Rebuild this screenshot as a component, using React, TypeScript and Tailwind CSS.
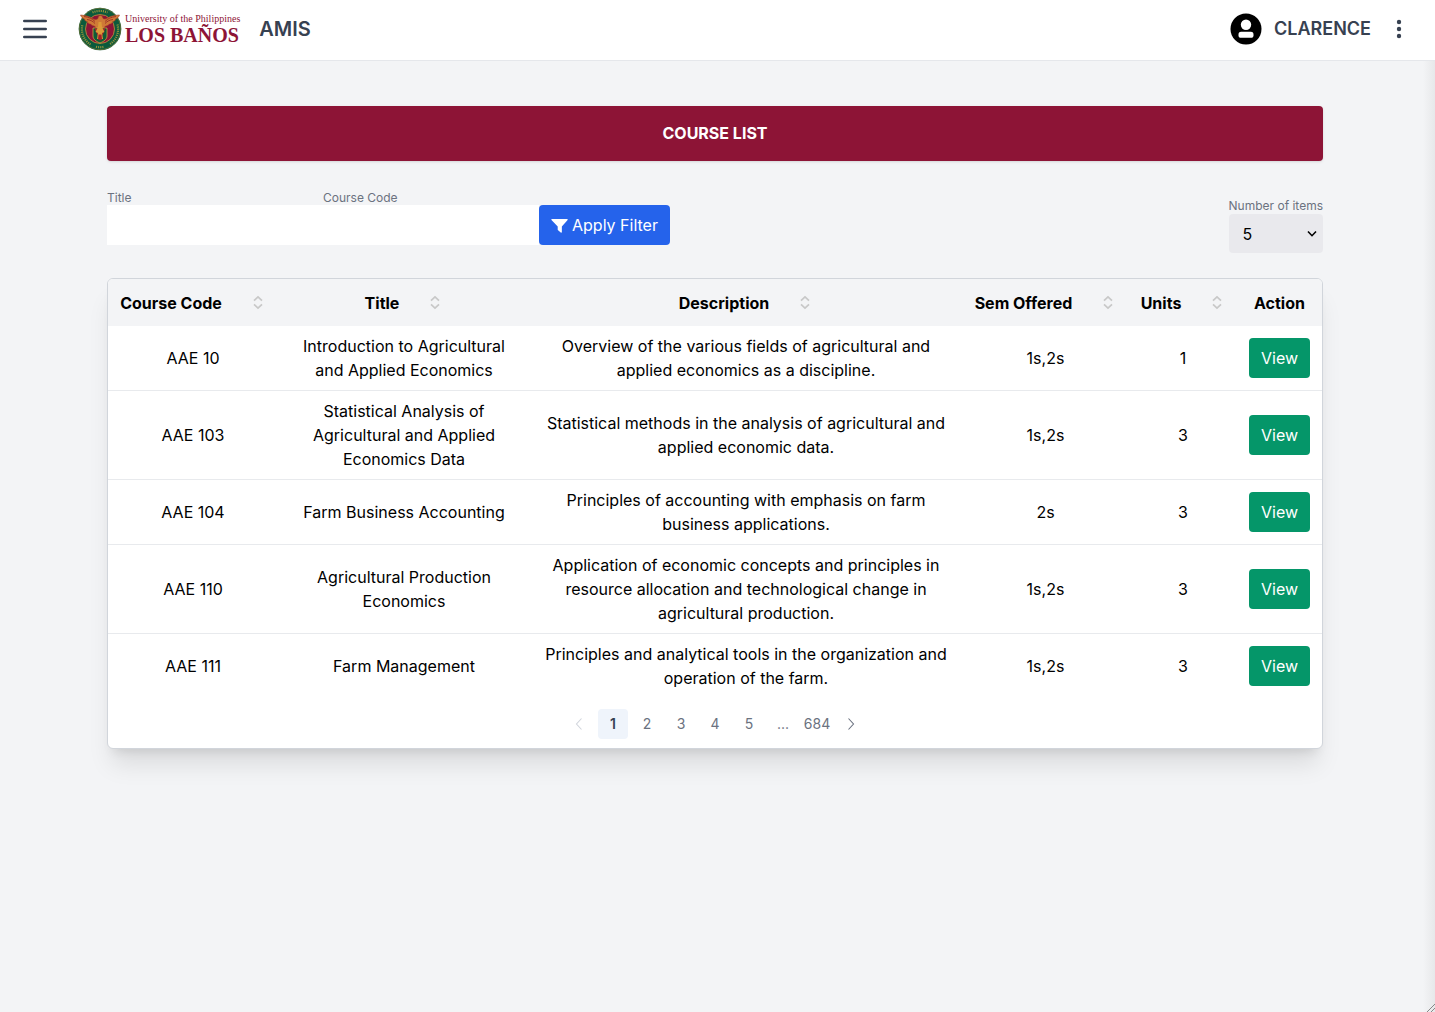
import { useState } from "react";

const courses = [
  { code: "AAE 10", title: "Introduction to Agricultural and Applied Economics", description: "Overview of the various fields of agricultural and applied economics as a discipline.", sem: "1s,2s", units: 1 },
  { code: "AAE 103", title: "Statistical Analysis of Agricultural and Applied Economics Data", description: "Statistical methods in the analysis of agricultural and applied economic data.", sem: "1s,2s", units: 3 },
  { code: "AAE 104", title: "Farm Business Accounting", description: "Principles of accounting with emphasis on farm business applications.", sem: "2s", units: 3 },
  { code: "AAE 110", title: "Agricultural Production Economics", description: "Application of economic concepts and principles in resource allocation and technological change in agricultural production.", sem: "1s,2s", units: 3 },
  { code: "AAE 111", title: "Farm Management", description: "Principles and analytical tools in the organization and operation of the farm.", sem: "1s,2s", units: 3 },
];

const columns = [
  { label: "Course Code", width: "w-[170px]" },
  { label: "Title", width: "w-[252px]" },
  { label: "Description", width: "w-[432px]" },
  { label: "Sem Offered", width: "w-[167px]" },
  { label: "Units", width: "w-[108px]" },
];

function Seal() {
  return (
    <svg viewBox="0 0 44 44" className="size-11 shrink-0" aria-hidden="true">
      <circle cx="22" cy="22" r="21.3" fill="#0b5a3c" />
      <circle cx="22" cy="22" r="20.7" fill="none" stroke="#8a7a35" strokeWidth=".6" />
      <circle cx="22" cy="22" r="14.500" fill="#8d1436" stroke="#b79b3c" strokeWidth=".8" />
      <g fill="none" stroke="#c9a63c" strokeWidth="2.200" strokeDasharray="1.100 1" opacity=".75">
        <path d="M12.500 37.500A18.200 18.200 0 0 1 4.500 17.500" />
        <path d="M14.500 5.500A18.200 18.200 0 0 1 29.500 5.500" />
        <path d="M39.500 17.500A18.200 18.200 0 0 1 31.500 37.500" />
        <path d="M18 39.800A18.200 18.200 0 0 0 26 39.800" />
      </g>
      <path d="M2.500 8c5 .5 8.500 1 12 3.500 2.500 1.500 4 1.300 5.500 0 .2-1.900 1-3 2.400-3 1.200 0 2 .8 2.200 1.900.2.800.5 1.100 1.300 1.500 2 .7 4-1.200 6.300-2.300C35 8.500 38 8.200 41.500 8c-1 2.300-2 3.500-4 4 .2 1.500-1.500 2.500-3 2.700-.2 1.500-1.700 2.300-3.200 2.400-.6 1.300-2 1.900-3.600 1.800l-2.500 2.500-1.500 1H20.500l-1.700-1-2.500-2.500c-1.600.1-3-.5-3.600-1.800-1.500-.1-3-.900-3.200-2.400-1.500-.2-3.200-1.200-3-2.700-2-.5-3-1.700-4-4z" fill="#cf7a36" stroke="#a33b24" strokeWidth=".6" />
      <path d="M6 9.500c5 .7 8 2 11 5M38 9.500c-5 .7-8 2-11 5M9 12.500c4 .5 6 2 8 4M35 12.500c-4 .5-6 2-8 4" fill="none" stroke="#9b2d25" strokeWidth=".9" />
      <path d="M15 21h14v8c0 3.500-3.500 5.500-7 7-3.500-1.500-7-3.500-7-7z" fill="#0f5a38" stroke="#d9b53e" strokeWidth=".7" />
      <path d="M16.500 21.500h11L22 34z" fill="#a61f2b" />
      <path d="M20.500 15h3l.5 5 2.500 5-2.500 1 1 6h-6l1-6-2.500-1 2.500-5z" fill="#dc9a38" />
      <path d="M20.500 27.500h3l.5 5h-4z" fill="#a61f2b" />
    </svg>
  );
}

function SortIcon() {
  return (
    <svg viewBox="0 0 16 16" className="size-4 shrink-0" fill="none" stroke="#c8c8c8" strokeWidth="1.700" aria-hidden="true">
      <path d="M4 5.700 8 1.900l4 3.800M4 9.300l4 3.800 4-3.800" />
    </svg>
  );
}

function Chevron({ left = false }: { left?: boolean }) {
  return (
    <svg viewBox="0 0 16 16" className="size-4" fill="none" stroke="currentColor" strokeWidth="1.100" aria-hidden="true">
      <path d={left ? "M10.500 2.500 5.500 8l5 5.500" : "M5.500 2.500 10.500 8l-5 5.500"} />
    </svg>
  );
}

export default function App() {
  const [page, setPage] = useState("1");
  return (
    <div className="relative flex min-h-screen flex-col overflow-hidden bg-[#f3f4f6] font-['Inter',sans-serif] text-base text-black">
      <header className="flex items-center border-b border-gray-200 bg-white pt-[7px] pr-[26px] pb-[9px] pl-[22px] text-[#374151]">
        <button aria-label="Open menu" className="mr-[30px]">
          <svg viewBox="0 0 26 24" className="h-6 w-[26px]" stroke="currentColor" strokeWidth="2.600" strokeLinecap="round" aria-hidden="true">
            <path d="M2.300 4h21.400M2.300 12h21.400M2.300 20h21.400" />
          </svg>
        </button>
        <a href="#home" className="flex items-center gap-[3px] font-['Liberation_Serif',serif] text-[#8d1436]" aria-label="University of the Philippines Los Baños">
          <Seal />
          <span className="flex flex-col whitespace-nowrap">
            <span className="text-[10px] leading-3">University of the Philippines</span>
            <span className="text-xl leading-5 font-bold">LOS BAÑOS</span>
          </span>
        </a>
        <span className="ml-[19px] text-xl font-semibold">AMIS</span>
        <div className="ml-auto flex items-center">
          <svg viewBox="0 0 32 32" className="size-8" aria-hidden="true">
            <circle cx="16" cy="16" r="15.500" fill="#000" />
            <circle cx="16" cy="11.800" r="5.200" fill="#fff" />
            <rect x="8.500" y="18.800" width="15" height="6" rx="2.600" fill="#fff" />
          </svg>
          <span className="ml-3 text-lg font-semibold">CLARENCE</span>
          <button aria-label="More options" className="ml-[18px]">
            <svg viewBox="0 0 20 20" className="size-5" fill="currentColor" aria-hidden="true">
              <circle cx="10" cy="3" r="2.200" />
              <circle cx="10" cy="10" r="2.200" />
              <circle cx="10" cy="17" r="2.200" />
            </svg>
          </button>
        </div>
      </header>

      <div className="pr-[5px]">
        <main className="mx-auto max-w-7xl px-8 pt-[45px]">
          <h1 className="rounded bg-[#8d1436] py-4 text-center leading-[23px] font-bold text-white shadow-sm">COURSE LIST</h1>

          <form className="mt-[31px] flex items-start" onSubmit={(e) => e.preventDefault()}>
            <div className="w-[216px]">
              <label htmlFor="title" className="block text-xs leading-3 text-[#6b7280]">Title</label>
              <input id="title" className="mt-px block h-10 w-full bg-white px-3 outline-none" />
            </div>
            <div className="w-[216px]">
              <label htmlFor="code" className="block text-xs leading-3 text-[#6b7280]">Course Code</label>
              <input id="code" className="mt-px block h-10 w-full bg-white px-3 outline-none" />
            </div>
            <button className="mt-[13px] flex h-10 items-center gap-1 rounded bg-[#2563eb] px-3 text-white">
              <svg viewBox="0 0 18 18" className="size-[17px]" fill="currentColor" aria-hidden="true">
                <path d="M1 2h16c.8 0 1 .8.600 1.300L11.500 10v5.800c0 .7-.7 1-1.200.6L7.500 14a1 1 0 0 1-.4-.8V10L.5 3.300C0 2.800.3 2 1 2z" />
              </svg>
              Apply Filter
            </button>
            <div className="mt-2 ml-auto">
              <label htmlFor="items" className="block text-xs leading-3 text-[#6b7280]">Number of items</label>
              <div className="relative mt-0.5">
                <select id="items" defaultValue="5" className="block h-[39px] w-full appearance-none rounded bg-[#e9e9ed] px-3.5">
                  <option>5</option>
                  <option>10</option>
                  <option>20</option>
                </select>
                <svg viewBox="0 0 10 8" className="pointer-events-none absolute top-4 right-1.5 h-2 w-2.5" fill="none" stroke="#000" strokeWidth="1.600" aria-hidden="true">
                  <path d="M1 1.500 5 5.700 9 1.500" />
                </svg>
              </div>
            </div>
          </form>

          <section className="mt-[25px] overflow-hidden rounded-md border border-[#d1d5db] bg-white shadow-xl">
            <table className="w-full table-fixed border-collapse text-center">
              <thead className="bg-[#f3f4f6]">
                <tr>
                  {columns.map((c) => (
                    <th key={c.label} className={`${c.width} h-[47px] p-0 font-bold`}>
                      <button className="inline-flex items-center gap-7 align-middle whitespace-nowrap">
                        {c.label}
                        <SortIcon />
                      </button>
                    </th>
                  ))}
                  <th className="w-[85px] p-0 font-bold">Action</th>
                </tr>
              </thead>
              <tbody>
                {courses.map((c) => (
                  <tr key={c.code} className="border-b border-[#e8eaed] last:border-b-0">
                    <td className="px-3 py-2">{c.code}</td>
                    <td className="px-3 py-2">{c.title}</td>
                    <td className="px-3 py-2">{c.description}</td>
                    <td className="px-3 py-2">{c.sem}</td>
                    <td className="px-3 py-2">{c.units}</td>
                    <td className="px-3 py-2">
                      <button className="h-10 rounded bg-[#059669] px-3 align-middle text-white">View</button>
                    </td>
                  </tr>
                ))}
              </tbody>
            </table>
            <nav aria-label="Pagination" className="flex justify-center gap-1 pt-[11px] pb-[9px] text-sm text-[#6b7280]">
              <button aria-label="Previous page" disabled className="grid size-[30px] place-items-center text-gray-300">
                <Chevron left />
              </button>
              {["1", "2", "3", "4", "5", "...", "684"].map((p) =>
                p === "..." ? (
                  <span key={p} className="grid size-[30px] place-items-center">...</span>
                ) : (
                  <button
                    key={p}
                    onClick={() => setPage(p)}
                    aria-current={p === page ? "page" : undefined}
                    className={p === page ? "size-[30px] rounded bg-[#eff4fb] font-semibold text-gray-700" : "size-[30px] rounded"}
                  >
                    {p}
                  </button>
                ),
              )}
              <button aria-label="Next page" className="grid size-[30px] place-items-center">
                <Chevron />
              </button>
            </nav>
          </section>
        </main>
      </div>

      <div className="pointer-events-none absolute top-[61px] right-0 bottom-0 w-3 bg-linear-to-r from-transparent to-black/5" />
      <svg viewBox="0 0 8 8" className="pointer-events-none absolute right-0 bottom-0 size-2" stroke="#888" strokeWidth="1" aria-hidden="true">
        <path d="M0 8 8 0M4 8l4-4" />
      </svg>
    </div>
  );
}
